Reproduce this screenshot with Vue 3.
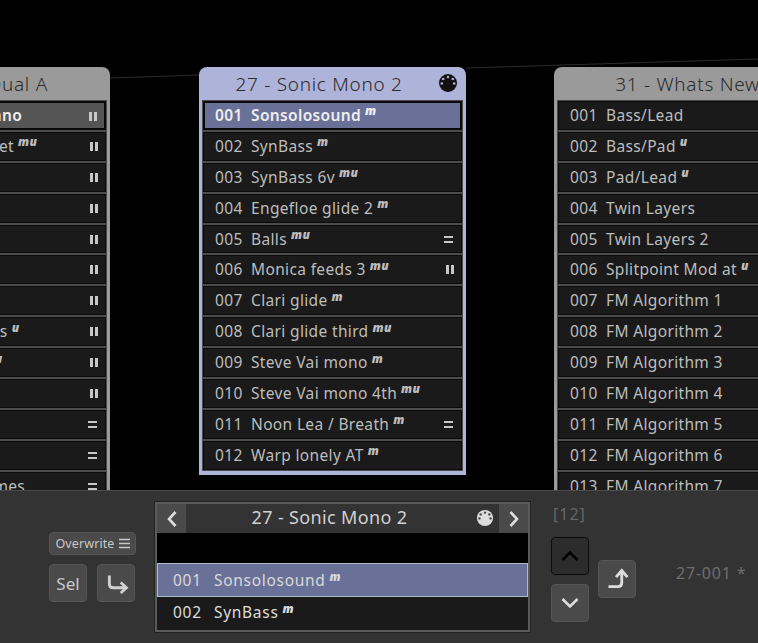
<template>
  <div class="page">
    <div class="canvas">
      <svg class="wires" width="758" height="490">
        <line x1="110" y1="78" x2="199" y2="75" />
        <line x1="466" y1="68" x2="758" y2="59" />
      </svg>
      <div
        v-for="bank in banks"
        :key="bank.title"
        class="bank"
        :class="{ active: bank.active }"
        :style="{ left: bank.left + 'px' }"
      >
        <div class="bank-head">
          <span>{{ bank.title }}</span>
          <svg v-if="bank.active" class="midi" viewBox="0 0 20 20" width="20" height="20">
            <circle cx="10" cy="10" r="9" fill="#111" />
            <circle v-for="(h, i) in holes" :key="i" :cx="h[0]" :cy="h[1]" r="1.3" fill="#aeb3da" />
          </svg>
        </div>
        <div class="bank-list">
          <div
            v-for="(p, i) in bank.items"
            :key="i"
            class="row"
            :class="{ sel: i === 0 && bank.active, held: i === 0 && bank.held }"
          >
            <span class="num">{{ num(i) }}</span>
            <span class="name">{{ p.n }}</span>
            <span v-if="p.m" class="mode">{{ p.m }}</span>
            <span v-if="p.t" class="tag" :class="p.t"></span>
          </div>
        </div>
      </div>
    </div>

    <div class="panel">
      <div class="left-tools">
        <button class="btn overwrite">
          Overwrite
          <svg width="11" height="11" viewBox="0 0 11 11"><path d="M0 1.500h11M0 5.500h11M0 9.500h11" stroke="#c8c8c8" stroke-width="1.6" /></svg>
        </button>
        <div class="tool-row">
          <button class="btn square sel-btn">Sel</button>
          <button class="btn square">
            <svg width="38" height="38" viewBox="0 0 38 38" fill="none" stroke="#d0d0d0" stroke-width="3">
              <path d="M12 11v9q0 4 4 4h13M24 18.500l6 5.500-6 5.500" />
            </svg>
          </button>
        </div>
      </div>

      <div class="picker">
        <div class="picker-head">
          <button class="nav">
            <svg width="12" height="18" viewBox="0 0 12 18" fill="none" stroke="#ddd" stroke-width="2.6"><path d="M9.500 2L3 9l6.500 7" /></svg>
          </button>
          <div class="picker-title">
            <span>27 - Sonic Mono 2</span>
            <svg class="midi" viewBox="0 0 20 20" width="18" height="18">
              <circle cx="10" cy="10" r="9" fill="#ddd" />
              <circle v-for="(h, i) in holes" :key="i" :cx="h[0]" :cy="h[1]" r="1.3" fill="#444" />
            </svg>
          </div>
          <button class="nav">
            <svg width="12" height="18" viewBox="0 0 12 18" fill="none" stroke="#ddd" stroke-width="2.6"><path d="M2.500 2L9 9l-6.500 7" /></svg>
          </button>
        </div>
        <div class="picker-gap"></div>
        <div class="pick sel">
          <span class="num">001</span><span class="name">Sonsolosound</span><span class="mode">m</span>
        </div>
        <div class="pick second">
          <span class="num">002</span><span class="name">SynBass</span><span class="mode">m</span>
        </div>
      </div>

      <div class="steps">
        <div class="count">[12]</div>
        <button class="btn square pressed">
          <svg width="18" height="12" viewBox="0 0 18 12" fill="none" stroke="#000" stroke-width="2.6"><path d="M1.500 10l7.500-7.500 7.500 7.500" /></svg>
        </button>
        <button class="btn square">
          <svg width="18" height="12" viewBox="0 0 18 12" fill="none" stroke="#ddd" stroke-width="2.6"><path d="M1.500 2l7.500 7.500 7.500-7.500" /></svg>
        </button>
      </div>

      <button class="btn square jump">
        <svg width="38" height="38" viewBox="0 0 38 38" fill="none" stroke="#ddd" stroke-width="3">
          <path d="M10 27h10q4 0 4-4V10M18 17l6-7 6 7" />
        </svg>
      </button>

      <div class="current">27-001 *</div>
    </div>
  </div>
</template>

<script setup>
const holes = [[10, 4], [5.200, 6], [14.800, 6], [3.800, 10.500], [16.200, 10.500]]

const num = (i) => String(i + 1).padStart(3, '0')

const bars = (n, m, t) => ({ n, m, t })

const banks = [
  {
    title: '26 - Pno Dual A',
    left: -157,
    held: true,
    items: [
      bars('Dual Gran Piano', '', 'pause'),
      bars('Duo Electric Set', 'mu', 'pause'),
      bars('', '', 'pause'),
      bars('', '', 'pause'),
      bars('', '', 'pause'),
      bars('', '', 'pause'),
      bars('', '', 'pause'),
      bars('Warm Pin Keys', 'u', 'pause'),
      bars('Dual Rhodes', 'u', 'pause'),
      bars('', '', 'pause'),
      bars('', '', 'eq'),
      bars('', '', 'eq'),
      bars('Dual Soft Chimes', '', 'eq'),
    ],
  },
  {
    title: '27 - Sonic Mono 2',
    left: 199,
    active: true,
    items: [
      bars('Sonsolosound', 'm'),
      bars('SynBass', 'm'),
      bars('SynBass 6v', 'mu'),
      bars('Engefloe glide 2', 'm'),
      bars('Balls', 'mu', 'eq'),
      bars('Monica feeds 3', 'mu', 'pause'),
      bars('Clari glide', 'm'),
      bars('Clari glide third', 'mu'),
      bars('Steve Vai mono', 'm'),
      bars('Steve Vai mono 4th', 'mu'),
      bars('Noon Lea / Breath', 'm', 'eq'),
      bars('Warp lonely AT', 'm'),
    ],
  },
  {
    title: '31 - Whats New',
    left: 554,
    items: [
      bars('Bass/Lead'),
      bars('Bass/Pad', 'u'),
      bars('Pad/Lead', 'u'),
      bars('Twin Layers'),
      bars('Twin Layers 2'),
      bars('Splitpoint Mod at', 'u'),
      bars('FM Algorithm 1'),
      bars('FM Algorithm 2'),
      bars('FM Algorithm 3'),
      bars('FM Algorithm 4'),
      bars('FM Algorithm 5'),
      bars('FM Algorithm 6'),
      bars('FM Algorithm 7'),
    ],
  },
]
</script>

<style scoped>
.page {
  width: 758px;
  height: 643px;
  display: flex;
  flex-direction: column;
  background: #000;
  overflow: hidden;
  font-family: "Noto Sans", sans-serif;
  font-size: 15.500px;
  color: #bdbdbd;
}

.canvas {
  position: relative;
  height: 490px;
  overflow: hidden;
}

.wires {
  position: absolute;
  left: 0;
  top: 0;
}

.wires line {
  stroke: #2c2c2c;
  stroke-width: 1;
}

.bank {
  position: absolute;
  top: 67px;
  width: 267px;
  background: #9a9a9a;
  border-radius: 8px 8px 0 0;
  padding: 0 3px 4px;
  box-sizing: border-box;
}

.bank.active {
  background: #aeb3da;
}

.bank-head {
  position: relative;
  height: 33px;
  display: flex;
  align-items: center;
  justify-content: center;
  font-size: 19px;
  font-weight: 300;
  letter-spacing: 0.7px;
  color: #2a2a2a;
}

.bank.active .bank-head {
  padding-right: 27px;
}

.bank-head .midi {
  position: absolute;
  right: 5px;
  top: 6px;
}

.bank-list {
  display: flex;
  flex-direction: column;
  gap: 2px;
  background: #4c4c4c;
  border: 1px solid #4c4c4c;
}

.row {
  display: flex;
  align-items: center;
  padding: 0 0 1px 11px;
  height: 25.900px;
  background: #1a1a1a;
  border: 1px solid #0a0a0a;
  position: relative;
  letter-spacing: 0.35px;
}

.row.sel {
  background: #6a7198;
  border: 2px solid #0a0a0a;
  height: 23.900px;
  padding-left: 10px;
  color: #eee;
  font-weight: 600;
}

.row.held {
  background: #555;
  border: 2px solid #0a0a0a;
  height: 23.900px;
  padding-left: 10px;
  color: #eee;
  font-weight: 600;
}

.num {
  width: 36px;
  flex: none;
}

.name {
  white-space: nowrap;
}

.mode {
  margin-left: 4px;
  margin-top: -7px;
  font-size: 12px;
  font-weight: 900;
  font-style: italic;
  letter-spacing: 0.4px;
  line-height: 1;
}

.tag {
  position: absolute;
  right: 7px;
  top: 9px;
  width: 8px;
  height: 9px;
  box-sizing: border-box;
}

.tag.pause {
  background: linear-gradient(90deg, #c8c8c8 0 3px, transparent 3px 5px, #c8c8c8 5px 8px);
}

.tag.eq {
  top: 10px;
  right: 8px;
  width: 9px;
  background: linear-gradient(180deg, #c8c8c8 0 2px, transparent 2px 5px, #c8c8c8 5px 7px, transparent 7px);
}

.panel {
  flex: 1;
  display: flex;
  align-items: flex-start;
  background: #333;
  border-top: 1px solid #4a4a4a;
  position: relative;
  box-sizing: border-box;
}

.btn {
  font: inherit;
  color: #c8c8c8;
  background: #4a4a4a;
  border: 1px solid #555;
  border-radius: 4px;
  padding: 0;
  display: flex;
  align-items: center;
  justify-content: center;
  box-sizing: border-box;
}

.square {
  width: 38px;
  height: 38px;
}

.left-tools {
  width: 87px;
  margin: 41px 0 0 49px;
  display: flex;
  flex-direction: column;
  gap: 9px;
}

.overwrite {
  height: 23px;
  font-size: 12.500px;
  letter-spacing: 0.1px;
  gap: 4px;
}

.tool-row {
  display: flex;
  gap: 10px;
}

.sel-btn {
  font-size: 17px;
}

.picker {
  width: 377px;
  height: 132px;
  margin: 10px 0 0 18px;
  box-sizing: border-box;
  border: 3px solid #5a5a5a;
  outline: 1px solid #222;
  outline-offset: -1px;
  display: flex;
  flex-direction: column;
  background: #1a1a1a;
}

.picker-head {
  height: 29px;
  display: flex;
  background: #333;
  flex: none;
}

.nav {
  width: 29px;
  background: #4a4a4a;
  border: 0;
  padding: 0;
  display: flex;
  align-items: center;
  justify-content: center;
}

.picker-title {
  flex: 1;
  position: relative;
  display: flex;
  align-items: center;
  justify-content: center;
  padding: 0 26px 3px 0;
  font-size: 18px;
  letter-spacing: 0.35px;
  color: #d0d0d0;
}

.picker-title .midi {
  position: absolute;
  right: 5px;
  top: 5px;
}

.picker-gap {
  height: 30px;
  background: #000;
  flex: none;
}

.pick {
  height: 34px;
  display: flex;
  align-items: center;
  padding-left: 16px;
  letter-spacing: 0.7px;
  flex: none;
  box-sizing: border-box;
  color: #ddd;
}

.pick .num {
  width: 41px;
}

.pick.sel {
  background: #6a7198;
  border: 1px solid #b4b8d8;
  padding-left: 15px;
  color: #d8d8d8;
}

.pick.second {
  height: 32px;
  padding: 0 0 2px 16px;
}

.steps {
  width: 38px;
  margin: 12px 0 0 20px;
  display: flex;
  flex-direction: column;
}

.count {
  color: #666;
  height: 34px;
  line-height: 22px;
  white-space: nowrap;
  font-size: 16px;
  letter-spacing: 1px;
  margin-left: 2px;
}

.steps .square + .square {
  margin-top: 9px;
}

.pressed {
  background: #2c2c2c;
  border: 1px solid #0c0c0c;
}

.jump {
  margin: 69px 0 0 9px;
}

.current {
  margin: 71px 0 0 40px;
  color: #6e6e6e;
  font-size: 16px;
  letter-spacing: 0.8px;
  white-space: nowrap;
}
</style>

<style>
html, body {
  margin: 0;
  background: #000;
  overflow: hidden;
}
</style>
